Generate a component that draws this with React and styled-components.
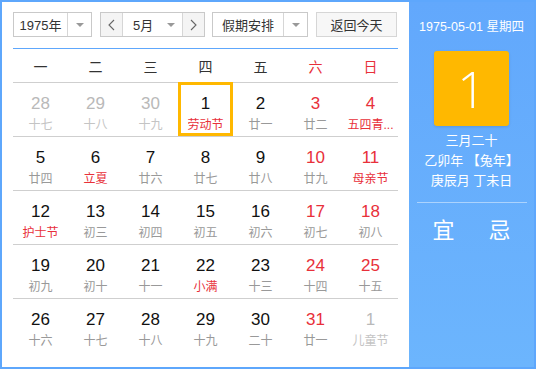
import React from 'react';
import styled, { createGlobalStyle } from 'styled-components';

const Global = createGlobalStyle`
  body {
    margin: 0;
    font-family: 'Liberation Sans', Arial, 'Noto Sans CJK SC', sans-serif;
  }
`;

const Frame = styled.div`
  width: 536px;
  height: 369px;
  box-sizing: border-box;
  border: 2px solid #5ea7fc;
  display: flex;
  background: #fff;
`;

const Left = styled.div`
  width: 407px;
  box-sizing: border-box;
  padding: 10px 11px 0 11px;
`;

const Toolbar = styled.div`
  display: flex;
  height: 25px;
  padding-bottom: 11px;
  border-bottom: 1px solid #5ea7fc;
`;

const Select = styled.div`
  display: flex;
  width: ${({ w }) => w}px;
  height: 25px;
  box-sizing: border-box;
  border: 1px solid #c9c9c9;
  margin-right: ${({ mr }) => mr || 0}px;
  font-size: 13px;
  color: #333;
`;

const SelectText = styled.div`
  flex: 1;
  display: flex;
  align-items: center;
  justify-content: center;
  border-right: 1px solid #d6d6d6;
`;

const Arrow = styled.div`
  width: 23px;
  display: flex;
  align-items: center;
  justify-content: center;
  &::after {
    content: '';
    border-left: 4px solid transparent;
    border-right: 4px solid transparent;
    border-top: 4px solid #999;
  }
`;

const NavBtn = styled.div`
  width: 21px;
  display: flex;
  align-items: center;
  justify-content: center;
  background: #f4f4f4;
  border-right: ${({ last }) => (last ? 'none' : '1px solid #d6d6d6')};
  border-left: ${({ last }) => (last ? '1px solid #d6d6d6' : 'none')};
`;

const MonthBox = styled.div`
  flex: 1;
  display: flex;
  align-items: center;
  padding-left: 10px;
  justify-content: space-between;
`;

const TodayBtn = styled.div`
  width: 81px;
  height: 25px;
  box-sizing: border-box;
  border: 1px solid #d6d6d6;
  background: #f7f7f7;
  display: flex;
  align-items: center;
  justify-content: center;
  font-size: 13px;
  color: #333;
`;

const Grid = styled.div`
  display: grid;
  grid-template-columns: repeat(7, 55px);
`;

const Head = styled.div`
  height: 33px;
  display: flex;
  align-items: center;
  justify-content: center;
  font-size: 14px;
  color: ${({ red }) => (red ? '#e8303a' : '#333')};
  border-bottom: 1px solid #cfcfcf;
`;

const Cell = styled.div`
  height: 54px;
  box-sizing: border-box;
  border-bottom: ${({ last }) => (last ? 'none' : '1px solid #cfcfcf')};
  display: flex;
  flex-direction: column;
  align-items: center;
  padding-top: 11px;
  box-shadow: ${({ sel }) => (sel ? 'inset 0 0 0 3px #ffb800' : 'none')};
  ${({ sel }) => sel && 'height: 55px; margin-top: -1px; padding-top: 12px;'}
`;

const Num = styled.div`
  font-size: 17px;
  line-height: 20px;
  color: ${({ c }) => c};
`;

const Lunar = styled.div`
  font-size: 12px;
  line-height: 16px;
  margin-top: 3px;
  color: ${({ c }) => c};
  white-space: nowrap;
`;

const Right = styled.div`
  flex: 1;
  background: linear-gradient(#62a8fc, #6cb5fd);
  color: #fff;
  display: flex;
  flex-direction: column;
  align-items: center;
  padding-top: 16px;
`;

const DateLine = styled.div`
  font-size: 12.5px;
  line-height: 18px;
`;

const BigDay = styled.div`
  width: 75px;
  height: 75px;
  margin-top: 15px;
  background: #ffb800;
  border-radius: 3px;
  box-shadow: 0 1px 3px rgba(0, 0, 0, 0.12);
  display: flex;
  align-items: center;
  justify-content: center;
  font-size: 50px;
  font-weight: 300;
  font-family: 'Open Sans', 'Liberation Sans', sans-serif;
`;

const LunarInfo = styled.div`
  margin-top: 5px;
  font-size: 13px;
  line-height: 20px;
  text-align: center;
`;

const Sep = styled.div`
  width: 110px;
  height: 1px;
  background: rgba(255, 255, 255, 0.45);
  margin-top: 11px;
`;

const YiJi = styled.div`
  display: flex;
  gap: 34px;
  margin-top: 14px;
  font-size: 22px;
  line-height: 28px;
`;

const Chevron = ({ right }) => (
  <svg width="7" height="12" viewBox="0 0 7 12">
    <path
      d={right ? 'M1 1 L6 6 L1 11' : 'M6 1 L1 6 L6 11'}
      fill="none"
      stroke="#666"
      strokeWidth="1.1"
    />
  </svg>
);

const RED = '#e8303a';
const days = [
  ['28', '十七', 'o'], ['29', '十八', 'o'], ['30', '十九', 'o'], ['1', '劳动节', 'h', 'sel'], ['2', '廿一'], ['3', '廿二', 'w'], ['4', '五四青...', 'wh'],
  ['5', '廿四'], ['6', '立夏', 'h'], ['7', '廿六'], ['8', '廿七'], ['9', '廿八'], ['10', '廿九', 'w'], ['11', '母亲节', 'wh'],
  ['12', '护士节', 'h'], ['13', '初三'], ['14', '初四'], ['15', '初五'], ['16', '初六'], ['17', '初七', 'w'], ['18', '初八', 'w'],
  ['19', '初九'], ['20', '初十'], ['21', '十一'], ['22', '小满', 'h'], ['23', '十三'], ['24', '十四', 'w'], ['25', '十五', 'w'],
  ['26', '十六'], ['27', '十七'], ['28', '十八'], ['29', '十九'], ['30', '二十'], ['31', '廿一', 'w'], ['1', '儿童节', 'o'],
];

function colors(kind) {
  if (kind === 'o') return ['#b9b9b9', '#c4c4c4'];
  if (kind === 'h') return ['#111', RED];
  if (kind === 'w') return [RED, '#999'];
  if (kind === 'wh') return [RED, RED];
  return ['#111', '#999'];
}

export default function App() {
  return (
    <>
      <Global />
      <Frame>
        <Left>
          <Toolbar>
            <Select w={79} mr={8}>
              <SelectText>1975年</SelectText>
              <Arrow />
            </Select>
            <Select w={105} mr={7}>
              <NavBtn><Chevron /></NavBtn>
              <MonthBox>
                5月
                <Arrow />
              </MonthBox>
              <NavBtn last><Chevron right /></NavBtn>
            </Select>
            <Select w={96} mr={8}>
              <SelectText>假期安排</SelectText>
              <Arrow />
            </Select>
            <TodayBtn>返回今天</TodayBtn>
          </Toolbar>
          <Grid>
            {['一', '二', '三', '四', '五', '六', '日'].map((d, i) => (
              <Head key={d} red={i > 4}>{d}</Head>
            ))}
            {days.map(([n, l, k, s], i) => {
              const [nc, lc] = colors(k);
              return (
                <Cell key={i} sel={s} last={i >= 28}>
                  <Num c={nc}>{n}</Num>
                  <Lunar c={lc}>{l}</Lunar>
                </Cell>
              );
            })}
          </Grid>
        </Left>
        <Right>
          <DateLine>1975-05-01 星期四</DateLine>
          <BigDay>1</BigDay>
          <LunarInfo>
            三月二十<br />
            乙卯年 【兔年】<br />
            庚辰月 丁未日
          </LunarInfo>
          <Sep />
          <YiJi>
            <span>宜</span>
            <span>忌</span>
          </YiJi>
        </Right>
      </Frame>
    </>
  );
}
